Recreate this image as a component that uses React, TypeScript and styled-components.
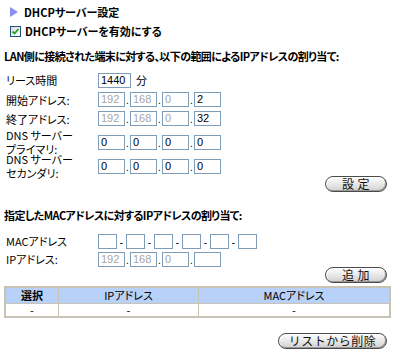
import styled, { createGlobalStyle } from 'styled-components';

const GlobalStyle = createGlobalStyle`
  html, body {
    margin: 0;
    padding: 0;
    background: #ffffff;
  }
  body {
    font-family: "Noto Sans CJK JP", "Liberation Sans", sans-serif;
    font-size: 11px;
    color: #000000;
    font-feature-settings: "palt";
  }
`;

const Page = styled.div`
  width: 400px;
  height: 359px;
  box-sizing: border-box;
  padding: 4px 10px 0 4px;
  display: flex;
  flex-direction: column;
`;

const TitleRow = styled.div`
  display: flex;
  align-items: center;
  gap: 6px;
  height: 16px;
  padding-left: 6px;
  font-weight: bold;
`;

const Arrow = styled.span`
  width: 0;
  height: 0;
  border-top: 5px solid transparent;
  border-bottom: 5px solid transparent;
  border-left: 8px solid #8e8ef0;
`;

const CheckRow = styled.label`
  display: flex;
  align-items: center;
  gap: 4px;
  height: 18px;
  margin-top: 2px;
  padding-left: 6px;
  font-weight: bold;
`;

const CheckBox = styled.span`
  width: 9px;
  height: 9px;
  border: 1px solid #1c5180;
  background: linear-gradient(135deg, #dcdcd7, #ffffff);
  display: flex;
  align-items: center;
  justify-content: center;
`;

const Heading = styled.div<{ $top: number }>`
  font-weight: bold;
  height: 16px;
  line-height: 16px;
  margin-top: ${(p) => p.$top}px;
  white-space: nowrap;
  letter-spacing: -0.6px;
`;

const Form = styled.div<{ $top: number }>`
  display: flex;
  flex-direction: column;
  margin-top: ${(p) => p.$top}px;
  padding-left: 2px;
`;

const Row = styled.div<{ $h: number }>`
  display: grid;
  grid-template-columns: 92px 1fr;
  align-items: center;
  height: ${(p) => p.$h}px;
`;

const Label = styled.div`
  line-height: 14px;
  white-space: nowrap;
`;

const Fields = styled.div`
  display: flex;
  align-items: center;
`;

const Field = styled.div<{ $w: number; $off?: boolean }>`
  box-sizing: border-box;
  width: ${(p) => p.$w}px;
  height: 15px;
  border: 1px solid #7f9db9;
  padding-left: 2px;
  line-height: 13px;
  font-family: "Liberation Sans", sans-serif;
  font-size: 11px;
  color: ${(p) => (p.$off ? '#a6a6a6' : '#000000')};
  background: #ffffff;
`;

const Sep = styled.span<{ $w: number }>`
  width: ${(p) => p.$w}px;
  text-align: center;
  align-self: flex-end;
  line-height: 12px;
  font-family: "Liberation Sans", sans-serif;
  font-size: 10px;
`;

const Unit = styled.span`
  margin-left: 5px;
`;

const ButtonRow = styled.div<{ $top: number }>`
  display: flex;
  justify-content: flex-end;
  margin-top: ${(p) => p.$top}px;
  padding-right: 3px;
`;

const PillButton = styled.button<{ $w: number }>`
  box-sizing: border-box;
  width: ${(p) => p.$w}px;
  height: 16px;
  padding: 0;
  border: 1px solid #4a4a4a;
  border-radius: 8px;
  background: linear-gradient(#fdfdfd, #e4e4e4 60%, #cfcfcf);
  box-shadow: inset 1px 1px 0 #ffffff, inset -1px -1px 0 #9a9a9a;
  font-family: "Noto Sans CJK JP", sans-serif;
  font-size: 12px;
  line-height: 14px;
  letter-spacing: 0.5px;
  color: #111111;
`;

const Table = styled.table`
  margin-top: 3px;
  width: 387px;
  border-collapse: separate;
  border-spacing: 1px;
  border: 1px solid #c8c3b4;
  background: #c8c3b4;
`;

const Th = styled.th<{ $w?: number }>`
  background: #b7d1f8;
  height: 15px;
  padding: 0;
  font-weight: normal;
  text-align: center;
  line-height: 15px;
  width: ${(p) => (p.$w ? `${p.$w}px` : 'auto')};
`;

const ThBold = styled(Th)`
  font-weight: bold;
`;

const Td = styled.td`
  background: #ffffff;
  height: 12px;
  padding: 0;
  text-align: center;
  line-height: 12px;
`;

const ipFields = (vals: string[], off: boolean[]) => (
  <Fields>
    {vals.map((v, i) => (
      <Fields key={i}>
        {i > 0 && <Sep $w={5}>.</Sep>}
        <Field $w={27} $off={off[i]}>
          {v}
        </Field>
      </Fields>
    ))}
  </Fields>
);

export default function App() {
  return (
    <>
      <GlobalStyle />
      <Page>
        <TitleRow>
          <Arrow />
          DHCPサーバー設定
        </TitleRow>
        <CheckRow>
          <CheckBox>
            <svg width="9" height="9" viewBox="0 0 9 9">
              <path d="M1.5 4.5 L3.5 6.5 L7.5 2" stroke="#21a121" strokeWidth="1.8" fill="none" />
            </svg>
          </CheckBox>
          DHCPサーバーを有効にする
        </CheckRow>
        <Heading $top={8}>
          LAN側に接続された端末に対する、以下の範囲によるIPアドレスの割り当て:
        </Heading>
        <Form $top={6}>
          <Row $h={20}>
            <Label>リース時間</Label>
            <Fields>
              <Field $w={33}>1440</Field>
              <Unit>分</Unit>
            </Fields>
          </Row>
          <Row $h={19}>
            <Label>開始アドレス:</Label>
            {ipFields(['192', '168', '0', '2'], [true, true, true, false])}
          </Row>
          <Row $h={19}>
            <Label>終了アドレス:</Label>
            {ipFields(['192', '168', '0', '32'], [true, true, true, false])}
          </Row>
          <Row $h={24}>
            <Label>
              DNS サーバー
              <br />
              プライマリ:
            </Label>
            {ipFields(['0', '0', '0', '0'], [false, false, false, false])}
          </Row>
          <Row $h={26}>
            <Label>
              DNS サーバー
              <br />
              セカンダリ:
            </Label>
            {ipFields(['0', '0', '0', '0'], [false, false, false, false])}
          </Row>
        </Form>
        <ButtonRow $top={-2}>
          <PillButton $w={62}>設&nbsp;定</PillButton>
        </ButtonRow>
        <Heading $top={15}>指定したMACアドレスに対するIPアドレスの割り当て:</Heading>
        <Form $top={9}>
          <Row $h={18}>
            <Label>MACアドレス</Label>
            <Fields>
              {[0, 1, 2, 3, 4, 5].map((i) => (
                <Fields key={i}>
                  {i > 0 && <Sep $w={9}>-</Sep>}
                  <Field $w={19} />
                </Fields>
              ))}
            </Fields>
          </Row>
          <Row $h={18}>
            <Label>IPアドレス:</Label>
            {ipFields(['192', '168', '0', ''], [true, true, true, false])}
          </Row>
        </Form>
        <ButtonRow $top={-1}>
          <PillButton $w={62}>追&nbsp;加</PillButton>
        </ButtonRow>
        <Table>
          <thead>
            <tr>
              <ThBold $w={52}>選択</ThBold>
              <Th $w={139}>IPアドレス</Th>
              <Th>MACアドレス</Th>
            </tr>
          </thead>
          <tbody>
            <tr>
              <Td>-</Td>
              <Td>-</Td>
              <Td>-</Td>
            </tr>
          </tbody>
        </Table>
        <ButtonRow $top={15}>
          <PillButton $w={109}>リストから削除</PillButton>
        </ButtonRow>
      </Page>
    </>
  );
}
